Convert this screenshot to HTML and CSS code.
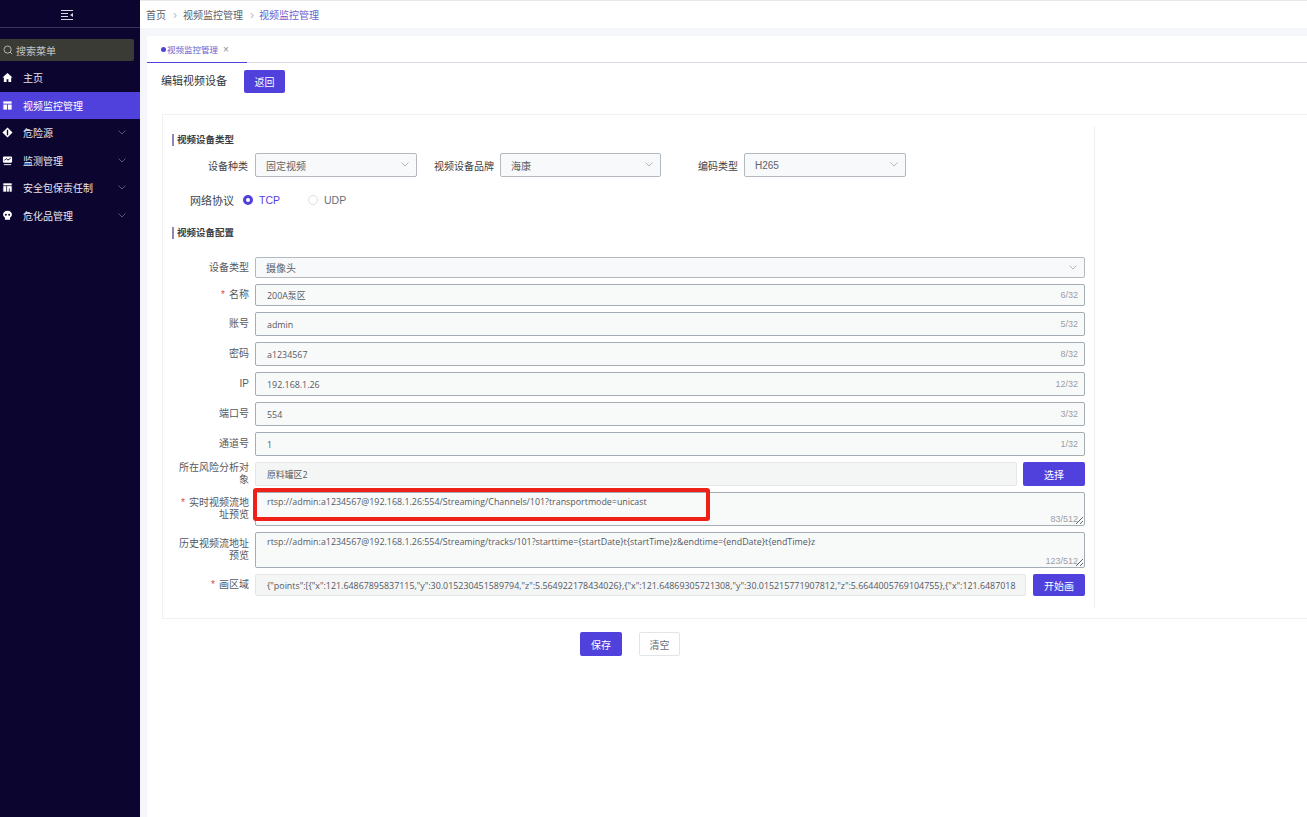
FILE: index.html
```html
<!DOCTYPE html>
<html lang="zh-CN">
<head>
    <meta charset="UTF-8">
    <title>视频监控管理</title>
    <link rel="stylesheet" href="styles.css">
</head>
<body>
    <aside class="sidebar">
        <div class="sidebar-top">
            <svg class="fold-icon" viewBox="0 0 12 10" width="12" height="10"><path d="M0 .5h12M0 3.5h7M0 6.5h7M0 9.5h12" stroke="#d8d8e0" fill="none"/><path d="M12 3v4L9 5z" fill="#d8d8e0"/></svg>
        </div>
        <div class="search">
            <svg viewBox="0 0 12 12" width="10" height="10"><circle cx="5.5" cy="5.5" r="4.3" stroke="#c8c8c8" fill="none"/><path d="M8.6 8.6l2.4 2.4" stroke="#c8c8c8"/></svg>
            <span>搜索菜单</span>
        </div>
        <nav class="menu">
            <a class="menu-item">
                <svg viewBox="0 0 12 12" width="11" height="11"><path d="M6 1L0.5 6H2v5h3V8h2v3h3V6h1.5z" fill="#fff"/></svg>
                <span>主页</span>
            </a>
            <a class="menu-item active">
                <svg viewBox="0 0 12 12" width="11" height="11"><path d="M1 1h10v10H1zM1 4.5h10M6 4.5V11" stroke="#5040dc" fill="#fff"/></svg>
                <span>视频监控管理</span>
            </a>
            <a class="menu-item">
                <svg viewBox="0 0 12 12" width="11" height="11"><path d="M6 .5L11.5 6 6 11.5.5 6z" fill="#fff"/><path d="M6 3v6" stroke="#0c0530" stroke-width="1.5"/></svg>
                <span>危险源</span>
                <svg class="chevron" viewBox="0 0 8 5" width="8" height="5"><path d="M.5.5L4 4 7.5.5" stroke="#5a5670" fill="none"/></svg>
            </a>
            <a class="menu-item">
                <svg viewBox="0 0 12 12" width="11" height="11"><rect x="1" y="1.5" width="10" height="7" rx="1.5" fill="#fff"/><path d="M2.5 6l2-2 2 1.5 3-2" stroke="#0c0530" fill="none"/><path d="M2 10.5h8" stroke="#fff"/></svg>
                <span>监测管理</span>
                <svg class="chevron" viewBox="0 0 8 5" width="8" height="5"><path d="M.5.5L4 4 7.5.5" stroke="#5a5670" fill="none"/></svg>
            </a>
            <a class="menu-item">
                <svg viewBox="0 0 12 12" width="11" height="11"><path d="M1 1h10v10H1zM1 4h10M5 4v7M8 7v4" stroke="#0c0530" stroke-width=".8" fill="#fff"/></svg>
                <span>安全包保责任制</span>
                <svg class="chevron" viewBox="0 0 8 5" width="8" height="5"><path d="M.5.5L4 4 7.5.5" stroke="#5a5670" fill="none"/></svg>
            </a>
            <a class="menu-item">
                <svg viewBox="0 0 12 12" width="11" height="11"><path d="M6 .8C3 .8 1.2 2.7 1.2 5c0 1.6.8 2.7 2 3.3v2.200h5.600V8.300c1.200-.6 2-1.700 2-3.300C10.800 2.700 9 .8 6 .8z" fill="#fff"/><circle cx="4.2" cy="5.3" r="1.1" fill="#0c0530"/><circle cx="7.8" cy="5.3" r="1.1" fill="#0c0530"/></svg>
                <span>危化品管理</span>
                <svg class="chevron" viewBox="0 0 8 5" width="8" height="5"><path d="M.5.5L4 4 7.5.5" stroke="#5a5670" fill="none"/></svg>
            </a>
        </nav>
    </aside>

    <main class="main">
        <div class="breadcrumb">
            <span>首页</span>
            <i class="sep">›</i>
            <span>视频监控管理</span>
            <i class="sep">›</i>
            <span class="current">视频监控管理</span>
        </div>
        <div class="tabs">
            <div class="tab"><b class="tab-dot"></b>视频监控管理<em class="tab-close">×</em></div>
        </div>
        <div class="content">
            <div class="page-head">
                <h2>编辑视频设备</h2>
                <button class="btn btn-primary btn-back">返回</button>
            </div>

            <div class="card">
                <div class="form-area">
                    <h3 class="section-title">视频设备类型</h3>
                    <div class="type-row">
                        <label class="type-label type-label-1">设备种类</label>
                        <div class="select select-type">固定视频
                            <svg class="chevron" viewBox="0 0 8 5" width="8" height="5"><path d="M.5.5L4 4 7.5.5" stroke="#b4b8c0" fill="none"/></svg>
                        </div>
                        <label class="type-label type-label-2">视频设备品牌</label>
                        <div class="select select-type select-brand">海康
                            <svg class="chevron" viewBox="0 0 8 5" width="8" height="5"><path d="M.5.5L4 4 7.5.5" stroke="#b4b8c0" fill="none"/></svg>
                        </div>
                        <label class="type-label type-label-3">编码类型</label>
                        <div class="select select-type">H265
                            <svg class="chevron" viewBox="0 0 8 5" width="8" height="5"><path d="M.5.5L4 4 7.5.5" stroke="#b4b8c0" fill="none"/></svg>
                        </div>
                    </div>
                    <div class="radio-row">
                        <label class="radio-label">网络协议</label>
                        <span class="radio checked"></span><span class="radio-text checked">TCP</span>
                        <span class="radio"></span><span class="radio-text">UDP</span>
                    </div>
                    <h3 class="section-title section-title-2">视频设备配置</h3>

                    <div class="fields">
                        <div class="field h21">
                            <label>设备类型</label>
                            <div class="select select-full">摄像头
                                <svg class="chevron" viewBox="0 0 8 5" width="8" height="5"><path d="M.5.5L4 4 7.5.5" stroke="#b4b8c0" fill="none"/></svg>
                            </div>
                        </div>
                        <div class="field h22">
                            <label><i>*</i>名称</label>
                            <div class="control"><input value="200A泵区"><span class="count">6/32</span></div>
                        </div>
                        <div class="field">
                            <label>账号</label>
                            <div class="control"><input value="admin"><span class="count">5/32</span></div>
                        </div>
                        <div class="field">
                            <label>密码</label>
                            <div class="control"><input value="a1234567"><span class="count">8/32</span></div>
                        </div>
                        <div class="field">
                            <label>IP</label>
                            <div class="control"><input value="192.168.1.26"><span class="count">12/32</span></div>
                        </div>
                        <div class="field">
                            <label>端口号</label>
                            <div class="control"><input value="554"><span class="count">3/32</span></div>
                        </div>
                        <div class="field">
                            <label>通道号</label>
                            <div class="control"><input value="1"><span class="count">1/32</span></div>
                        </div>
                        <div class="field">
                            <label>所在风险分析对象</label>
                            <div class="control"><input class="disabled" value="原料罐区2" disabled></div>
                            <button class="btn btn-primary btn-pick">选择</button>
                        </div>
                        <div class="field h34">
                            <label><i>*</i>实时视频流地址预览</label>
                            <div class="control">
                                <textarea>rtsp://admin:a1234567@192.168.1.26:554/Streaming/Channels/101?transportmode=unicast</textarea>
                                <span class="count count-area">83/512</span>
                                <div class="annotation"></div>
                            </div>
                        </div>
                        <div class="field h36">
                            <label>历史视频流地址预览</label>
                            <div class="control">
                                <textarea>rtsp://admin:a1234567@192.168.1.26:554/Streaming/tracks/101?starttime={startDate}t{startTime}z&amp;endtime={endDate}t{endTime}z</textarea>
                                <span class="count count-area">123/512</span>
                            </div>
                        </div>
                        <div class="field h22">
                            <label><i>*</i>画区域</label>
                            <div class="control"><input class="disabled" value='{"points":[{"x":121.64867895837115,"y":30.015230451589794,"z":5.564922178434026},{"x":121.64869305721308,"y":30.015215771907812,"z":5.6644005769104755},{"x":121.6487018' disabled></div>
                            <button class="btn btn-primary btn-draw">开始画</button>
                        </div>
                    </div>
                </div>
            </div>

            <div class="form-actions">
                <button class="btn btn-primary btn-save">保存</button>
                <button class="btn btn-plain">清空</button>
            </div>
        </div>
    </main>
</body>
</html>
```

FILE: styles.css
```css
* {
    margin: 0;
    padding: 0;
    box-sizing: border-box;
}

body {
    width: 1307px;
    height: 817px;
    overflow: hidden;
    display: flex;
    font-family: "Liberation Sans", "Noto Sans CJK SC", sans-serif;
    font-size: 10px;
    color: #4a4f57;
    background: #fff;
}

/* Sidebar */
.sidebar {
    width: 140px;
    flex: none;
    background: #0c0530;
    color: #e6e6ee;
}

.sidebar-top {
    height: 28px;
    display: flex;
    align-items: center;
    justify-content: center;
    border-bottom: 1px solid #3a3558;
}

.fold-icon {
    margin: 2px 0 0 -6px;
}

.search {
    margin: 11px 6px 0 0;
    height: 22px;
    background: #3b3b36;
    border-radius: 0 2px 2px 0;
    display: flex;
    align-items: center;
    gap: 3px;
    padding-left: 3px;
    color: #c4c4c4;
}

.menu {
    margin-top: 3px;
}

.menu-item {
    height: 27.5px;
    display: flex;
    align-items: center;
    padding-left: 2px;
    position: relative;
}

.menu-item span {
    margin-left: 10px;
}

.menu-item.active {
    background: #5040dc;
    color: #fff;
}

.menu-item .chevron {
    position: absolute;
    right: 14px;
    top: 11px;
}

/* Main */
.main {
    flex: 1;
    min-width: 0;
    display: flex;
    flex-direction: column;
    background: #f4f6fa;
}

.breadcrumb {
    height: 28px;
    flex: none;
    background: #fff;
    border-top: 1px solid #e8e8e8;
    display: flex;
    align-items: center;
    padding-left: 6px;
    color: #5c6068;
}

.breadcrumb .sep {
    font-style: normal;
    font-size: 12px;
    color: #b8bcc4;
    margin: 0 6px 0 7px;
}

.breadcrumb .sep:nth-of-type(2) {
    margin-right: 5px;
}

.breadcrumb .current {
    color: #6a5fd0;
}

.tabs {
    margin: 8px 0 0 7px;
    height: 27px;
    flex: none;
    background: #fff;
    border-bottom: 1px solid #d8dbe6;
}

.tab {
    width: 100px;
    height: 27px;
    display: flex;
    align-items: center;
    padding-left: 14px;
    font-size: 8.5px;
    color: #6a5fd0;
    border-bottom: 1px solid #5040dc;
}

.tab-dot {
    width: 5px;
    height: 5px;
    border-radius: 50%;
    background: #5040dc;
    margin-right: 1px;
}

.tab-close {
    font-style: normal;
    font-size: 10px;
    color: #8c90a0;
    margin-left: 5px;
}

.content {
    flex: 1;
    margin-left: 7px;
    background: #fff;
    padding-left: 15px;
}

.page-head {
    height: 51px;
    display: flex;
    align-items: flex-start;
    padding-top: 7px;
}

.page-head h2 {
    font-size: 11px;
    font-weight: 400;
    color: #33363c;
    line-height: 23px;
    width: 83px;
    margin-left: -1px;
}

.btn {
    border: none;
    font-family: inherit;
    font-size: 10px;
    border-radius: 2px;
    cursor: pointer;
}

.btn-primary {
    background: #5040dc;
    color: #fff;
}

.btn-back {
    width: 41px;
    height: 23px;
}

/* Form card */
.card {
    height: 505px;
    border: 1px solid #f0f1f4;
    border-right: none;
    padding: 11px 0 0 9px;
}

.form-area {
    width: 923px;
    height: 482px;
    border-right: 1px solid #eef0f3;
    padding-top: 8px;
}

.section-title {
    font-size: 9.5px;
    font-weight: 700;
    color: #3a3d44;
    line-height: 14px;
    border-left: 2px solid #8c88b8;
    padding-left: 3px;
    height: 12px;
    display: flex;
    align-items: center;
}

.section-title-2 {
    margin-top: 20px;
}

.type-row {
    display: flex;
    align-items: center;
    margin-top: 7px;
    height: 24px;
}

.type-label {
    text-align: right;
    color: #3f4248;
}

.type-label-1 {
    width: 76px;
    margin-right: 7px;
}

.type-label-2 {
    margin: 0 6px 0 17px;
}

.type-label-3 {
    margin: 0 6px 0 37px;
}

.select {
    position: relative;
    background: #f7f9fa;
    border: 1px solid #b4b9c0;
    border-radius: 2px;
    display: flex;
    align-items: center;
    padding-left: 10px;
    color: #5e626a;
}

.select .chevron {
    position: absolute;
    right: 7px;
    top: 50%;
    margin-top: -3px;
}

.select-type {
    width: 162px;
    height: 24px;
}

.select-brand {
    width: 161px;
}

.radio-row {
    display: flex;
    align-items: center;
    margin-top: 16px;
    height: 14px;
}

.radio-label {
    width: 62px;
    font-size: 11px;
    text-align: right;
    color: #3f4248;
    margin-right: 9px;
}

.radio {
    width: 10px;
    height: 10px;
    border-radius: 50%;
    border: 1px solid #dcdfe3;
}

.radio.checked {
    border: 3px solid #5040dc;
    background: #fff;
}

.radio-text {
    font-size: 10.5px;
    margin: 0 28px 0 6px;
    color: #6a6e76;
}

.radio-text.checked {
    color: #5040dc;
}

.fields {
    margin-top: 18px;
    display: flex;
    flex-direction: column;
    gap: 6px;
}

.field {
    display: flex;
    height: 24px;
    gap: 6px;
    padding-right: 9px;
}

.field.h21 {
    height: 21px;
}

.field.h22 {
    height: 22px;
}

.field.h34 {
    height: 34px;
}

.field.h36 {
    height: 36px;
}

.field label {
    width: 77px;
    flex: none;
    align-self: center;
    text-align: right;
    line-height: 12px;
    color: #55595f;
}

.field label i {
    font-style: normal;
    color: #e04a4a;
    margin-right: 4px;
}

.select-full {
    flex: 1;
}

.control {
    flex: 1;
    min-width: 0;
    position: relative;
}

input,
textarea {
    display: block;
    width: 100%;
    height: 100%;
    font-family: "Open Sans", "Noto Sans CJK SC", sans-serif;
    font-size: 8.9px;
    color: #54585e;
    background: #f8fafa;
    border: 1px solid #a4acb4;
    border-radius: 2px;
    padding: 0 11px;
    outline: none;
}

textarea {
    padding: 3px 11px;
    resize: both;
    line-height: 12px;
}

input.disabled {
    background: #f4f5f5;
    border-color: #e4e6e8;
    padding-right: 8px;
}

.count {
    position: absolute;
    right: 7px;
    top: 50%;
    margin-top: -6px;
    line-height: 12px;
    font-size: 9px;
    color: #9a9ea6;
}

.count-area {
    top: auto;
    bottom: 1px;
    margin-top: 0;
    right: 7px;
}

/* red box drawn over the live stream textarea */
.annotation {
    position: absolute;
    left: -2px;
    top: -4px;
    width: 457px;
    height: 33px;
    border: 4px solid #ee2018;
    border-radius: 3px;
    pointer-events: none;
}

.btn-pick {
    width: 62px;
    flex: none;
}

.btn-draw {
    width: 52px;
    flex: none;
    margin-left: 1px;
}

.form-actions {
    display: flex;
    gap: 17px;
    padding: 13px 0 0 418px;
}

.btn-save {
    width: 42px;
    height: 24px;
}

.btn-plain {
    width: 41px;
    height: 24px;
    background: #fff;
    border: 1px solid #e2e4e8;
    color: #6a6e76;
}
```
